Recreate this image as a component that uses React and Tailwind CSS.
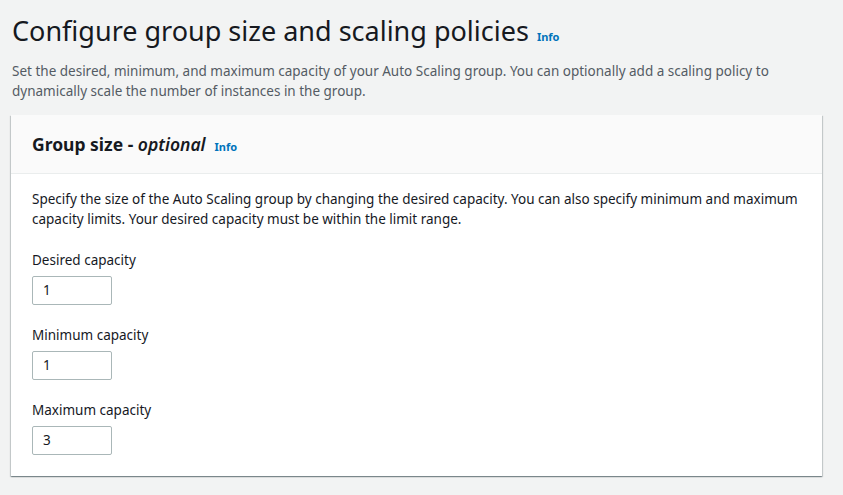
export default function App() {
  const fields = [
    { label: 'Desired capacity', value: '1' },
    { label: 'Minimum capacity', value: '1' },
    { label: 'Maximum capacity', value: '3' },
  ];

  return (
    <div className="min-h-screen bg-[#f2f3f3] text-[#16191f] font-['Noto_Sans',sans-serif] pt-[13px]">
      <div className="px-[12px]">
        <h1 className="flex items-baseline gap-[8px] text-[27px] leading-[36px] font-normal">
          Configure group size and scaling policies
          <a className="text-[11px] font-bold text-[#0073bb]">Info</a>
        </h1>
        <p className="mt-[6px] text-[13.5px] leading-[20px] text-[#545b64] w-[800px]">
          Set the desired, minimum, and maximum capacity of your Auto Scaling group. You can optionally add a scaling policy to dynamically scale the number of instances in the group.
        </p>
      </div>

      <div className="ml-[11px] mr-[21px] mt-[14px] bg-white shadow-[0_1px_1px_0_rgba(0,28,36,0.3),1px_1px_1px_0_rgba(0,28,36,0.15),-1px_1px_1px_0_rgba(0,28,36,0.15)]">
        <div className="h-[59px] bg-[#fafafa] border-b border-[#eaeded] px-[21px] flex items-center">
          <h2 className="flex items-baseline gap-[9px] text-[17.5px] font-bold">
            <span>
              Group size - <i className="font-semibold">optional</i>
            </span>
            <a className="text-[11px] font-bold text-[#0073bb]">Info</a>
          </h2>
        </div>
        <div className="px-[21px] pt-[15px] pb-[21px]">
          <p className="text-[13.5px] leading-[20px] text-[#16191f]">
            Specify the size of the Auto Scaling group by changing the desired capacity. You can also specify minimum and maximum capacity limits. Your desired capacity must be within the limit range.
          </p>
          <div className="mt-[21px] flex flex-col gap-[20px]">
            {fields.map((f) => (
              <div key={f.label}>
                <label className="block text-[13.5px] leading-[20px] text-[#16191f]">{f.label}</label>
                <div className="mt-[6px] w-[80px] h-[29px] border border-[#aab7b8] rounded-[2px] px-[10px] flex items-center text-[13.5px]">
                  {f.value}
                </div>
              </div>
            ))}
          </div>
        </div>
      </div>
    </div>
  );
}
